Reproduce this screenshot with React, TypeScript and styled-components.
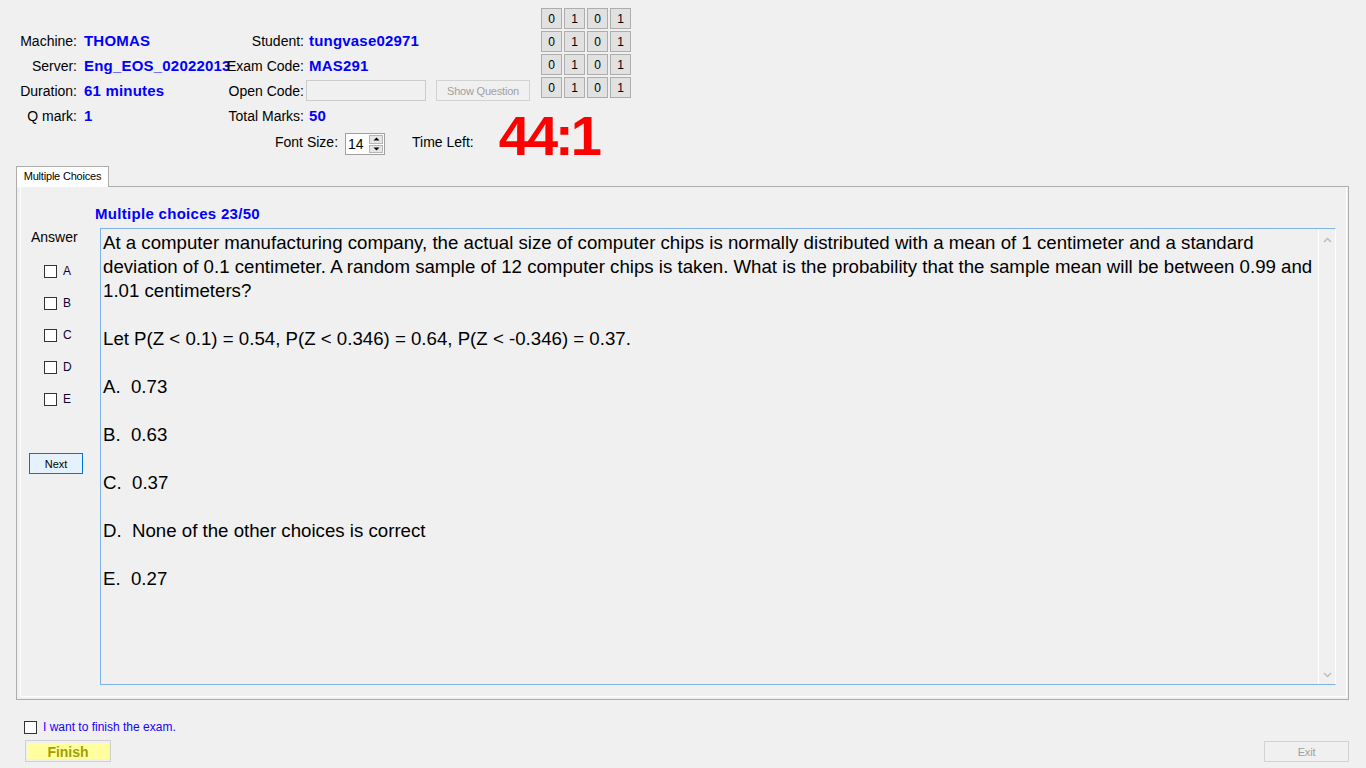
import React from "react";
import styled, { createGlobalStyle } from "styled-components";

const GlobalStyle = createGlobalStyle`
  html, body { margin: 0; padding: 0; background: #f0f0f0; }
  body { font-family: "Liberation Sans", Arial, sans-serif; color: #000; }
  * { box-sizing: border-box; }
`;

const Window = styled.div`
  width: 1366px;
  height: 768px;
  overflow: hidden;
  background: #f0f0f0;
  display: flex;
  flex-direction: column;
`;

const Header = styled.div`
  display: flex;
  align-items: flex-start;
  height: 128px;
`;

const InfoGrid = styled.div`
  margin-top: 28px;
  width: 541px;
  display: grid;
  grid-template-columns: 77px 152px 75px 1fr;
  grid-auto-rows: 25px;
  align-items: center;
`;

const Label = styled.div`
  font-size: 14px;
  line-height: 16px;
  white-space: nowrap;
  display: flex;
  justify-content: flex-end;
`;

const Value = styled.div<{ $pad?: number }>`
  font-size: 15px;
  line-height: 17px;
  font-weight: bold;
  letter-spacing: 0.2px;
  color: #0000ff;
  white-space: nowrap;
  overflow: hidden;
  padding-left: ${(p) => p.$pad ?? 7}px;
`;

const CodeCell = styled.div`
  display: flex;
  align-items: center;
  padding-left: 2px;
`;

const DisabledInput = styled.div`
  width: 120px;
  height: 21px;
  border: 1px solid #cccccc;
  background: #f0f0f0;
`;

const DisabledButton = styled.div<{ $w: number; $h: number }>`
  width: ${(p) => p.$w}px;
  height: ${(p) => p.$h}px;
  border: 1px solid #d2d2d2;
  background: #f0f0f0;
  color: #a0a0a0;
  font-size: 11px;
  letter-spacing: -0.2px;
  display: flex;
  align-items: center;
  justify-content: center;
`;

const ShowQuestion = styled(DisabledButton)`
  margin-left: 10px;
`;

const BitGrid = styled.div`
  margin-top: 8px;
  display: grid;
  grid-template-columns: repeat(4, 21px);
  grid-auto-rows: 21px;
  gap: 2px;
`;

const BitButton = styled.div`
  border: 1px solid #adadad;
  background: #e1e1e1;
  font-size: 12px;
  display: flex;
  align-items: center;
  justify-content: center;
`;

const FontRow = styled.div`
  height: 28px;
  display: flex;
  align-items: center;
  padding-left: 275px;
`;

const PlainLabel = styled.span<{ $ml?: number }>`
  font-size: 14px;
  line-height: 16px;
  white-space: nowrap;
  margin-left: ${(p) => p.$ml ?? 0}px;
`;

const Spinner = styled.div`
  margin-left: 7px;
  width: 40px;
  height: 22px;
  border: 1px solid #a0a0a0;
  background: #fff;
  display: flex;
  margin-top: 4px;
`;

const SpinValue = styled.div`
  flex: 1;
  font-size: 14px;
  line-height: 20px;
  padding-left: 2px;
`;

const SpinButtons = styled.div`
  width: 15px;
  display: flex;
  flex-direction: column;
  gap: 1px;
  padding: 1px 1px 1px 0;
`;

const SpinPart = styled.div`
  flex: 1;
  border: 1px solid #b5b5b5;
  background: #e6e6e6;
  display: flex;
  align-items: center;
  justify-content: center;
`;

const TimeValue = styled.span`
  margin-left: 25px;
  font-size: 56px;
  line-height: 28px;
  font-weight: bold;
  color: #ff0000;
  letter-spacing: -3px;
  transform: translateY(-6px);
`;

const TabHeader = styled.div`
  margin: 10px 0 -1px 16px;
  width: 93px;
  height: 21px;
  border: 1px solid #adadad;
  border-bottom: none;
  background: #ffffff;
  font-size: 11px;
  letter-spacing: -0.2px;
  line-height: 19px;
  text-align: center;
  position: relative;
  z-index: 1;
`;

const Panel = styled.div`
  margin: 0 17px 0 16px;
  height: 514px;
  border: 1px solid #adadad;
  display: flex;
  flex-direction: column;
`;

const Page = styled.div`
  flex: 1;
  margin: 0 1px 2px 3px;
  border: 1px solid #ffffff;
  border-top: none;
  display: flex;
  flex-direction: column;
`;

const Title = styled.div`
  padding: 18px 0 0 74px;
  font-size: 15px;
  line-height: 18px;
  font-weight: bold;
  letter-spacing: 0.3px;
  color: #0000ff;
`;

const Body = styled.div`
  margin-top: 5px;
  display: flex;
`;

const AnswerColumn = styled.div`
  width: 79px;
  display: flex;
  flex-direction: column;
`;

const AnswerLabel = styled.div`
  margin-top: 1px;
  padding-left: 10px;
  font-size: 14px;
  line-height: 16px;
`;

const Choices = styled.div`
  margin-top: 10px;
  display: flex;
  flex-direction: column;
`;

const ChoiceRow = styled.div`
  height: 32px;
  display: flex;
  align-items: center;
  padding-left: 23px;
  gap: 6px;
  font-size: 12px;
  color: #100030;
`;

const Box = styled.span`
  width: 13px;
  height: 13px;
  border: 1px solid #333333;
  background: #ffffff;
  flex: none;
`;

const NextButton = styled.div`
  margin: 38px 0 0 8px;
  width: 54px;
  height: 21px;
  border: 1px solid #0078d7;
  background: #e5f1fb;
  font-size: 11px;
  display: flex;
  align-items: center;
  justify-content: center;
`;

const TextBox = styled.div`
  flex: 1;
  margin-right: 10px;
  height: 457px;
  border: 1px solid #7eb4ea;
  border-right-color: #ffffff;
  display: flex;
  overflow: hidden;
`;

const TextContent = styled.div`
  flex: 1;
  padding: 2px 0 0 2px;
  font-size: 18.67px;
  line-height: 24px;
  white-space: pre;
  overflow: hidden;
`;

const ScrollBar = styled.div`
  width: 17px;
  flex: none;
  border-left: 1px solid #ffffff;
  display: flex;
  flex-direction: column;
  justify-content: space-between;
  align-items: center;
  padding: 8px 0 6px;
`;

const Footer = styled.div`
  margin-top: 19px;
  display: flex;
  justify-content: space-between;
  align-items: flex-end;
  padding: 0 17px 0 24px;
`;

const FooterLeft = styled.div`
  display: flex;
  flex-direction: column;
`;

const FinishCheck = styled.div`
  height: 16px;
  display: flex;
  align-items: center;
  gap: 6px;
  font-size: 12px;
  color: #2000ff;
`;

const FinishButton = styled.div`
  margin: 5px 0 0 1px;
  width: 86px;
  height: 22px;
  border: 1px solid #d0d0d0;
  padding: 2px 1px;
  display: flex;
`;

const FinishFace = styled.div`
  flex: 1;
  background: #ffffa0;
  color: #a0a000;
  font-size: 14px;
  font-weight: bold;
  display: flex;
  align-items: center;
  justify-content: center;
  padding-top: 1px;
`;

const Chevron = ({ up }: { up?: boolean }) => (
  <svg width="9" height="6" viewBox="0 0 9 6">
    <path
      d={up ? "M1 5 L4.5 1.5 L8 5" : "M1 1 L4.5 4.5 L8 1"}
      fill="none"
      stroke="#bdbdbd"
      strokeWidth="1.5"
    />
  </svg>
);

const Tri = ({ up }: { up?: boolean }) => (
  <svg width="7" height="4" viewBox="0 0 7 4">
    <path d={up ? "M0.5 3.5 L3.5 0.5 L6.5 3.5 Z" : "M0.5 0.5 L3.5 3.5 L6.5 0.5 Z"} fill="#000" />
  </svg>
);

const questionText =
  "At a computer manufacturing company, the actual size of computer chips is normally distributed with a mean of 1 centimeter and a standard\n" +
  "deviation of 0.1 centimeter. A random sample of 12 computer chips is taken. What is the probability that the sample mean will be between 0.99 and\n" +
  "1.01 centimeters?\n\n" +
  "Let P(Z < 0.1) = 0.54, P(Z < 0.346) = 0.64, P(Z < -0.346) = 0.37.\n\n" +
  "A.  0.73\n\n" +
  "B.  0.63\n\n" +
  "C.  0.37\n\n" +
  "D.  None of the other choices is correct\n\n" +
  "E.  0.27";

const bits = ["0", "1", "0", "1"];

export default function App() {
  return (
    <>
      <GlobalStyle />
      <Window>
        <Header>
          <InfoGrid>
            <Label>Machine:</Label>
            <Value>THOMAS</Value>
            <Label>Student:</Label>
            <Value $pad={5}>tungvase02971</Value>

            <Label>Server:</Label>
            <Value>Eng_EOS_02022013</Value>
            <Label>Exam Code:</Label>
            <Value $pad={5}>MAS291</Value>

            <Label>Duration:</Label>
            <Value>61 minutes</Value>
            <Label>Open Code:</Label>
            <CodeCell>
              <DisabledInput />
              <ShowQuestion $w={94} $h={21}>Show Question</ShowQuestion>
            </CodeCell>

            <Label>Q mark:</Label>
            <Value>1</Value>
            <Label>Total Marks:</Label>
            <Value $pad={5}>50</Value>
          </InfoGrid>
          <BitGrid>
            {[0, 1, 2, 3].map((r) =>
              bits.map((b, i) => <BitButton key={`${r}-${i}`}>{b}</BitButton>)
            )}
          </BitGrid>
        </Header>

        <FontRow>
          <PlainLabel>Font Size:</PlainLabel>
          <Spinner>
            <SpinValue>14</SpinValue>
            <SpinButtons>
              <SpinPart><Tri up /></SpinPart>
              <SpinPart><Tri /></SpinPart>
            </SpinButtons>
          </Spinner>
          <PlainLabel $ml={27}>Time Left:</PlainLabel>
          <TimeValue>44:1</TimeValue>
        </FontRow>

        <TabHeader>Multiple Choices</TabHeader>
        <Panel>
          <Page>
            <Title>Multiple choices 23/50</Title>
            <Body>
              <AnswerColumn>
                <AnswerLabel>Answer</AnswerLabel>
                <Choices>
                  {["A", "B", "C", "D", "E"].map((c) => (
                    <ChoiceRow key={c}>
                      <Box />
                      {c}
                    </ChoiceRow>
                  ))}
                </Choices>
                <NextButton>Next</NextButton>
              </AnswerColumn>
              <TextBox>
                <TextContent>{questionText}</TextContent>
                <ScrollBar>
                  <Chevron up />
                  <Chevron />
                </ScrollBar>
              </TextBox>
            </Body>
          </Page>
        </Panel>

        <Footer>
          <FooterLeft>
            <FinishCheck>
              <Box />
              I want to finish the exam.
            </FinishCheck>
            <FinishButton>
              <FinishFace>Finish</FinishFace>
            </FinishButton>
          </FooterLeft>
          <DisabledButton $w={85} $h={21}>Exit</DisabledButton>
        </Footer>
      </Window>
    </>
  );
}
